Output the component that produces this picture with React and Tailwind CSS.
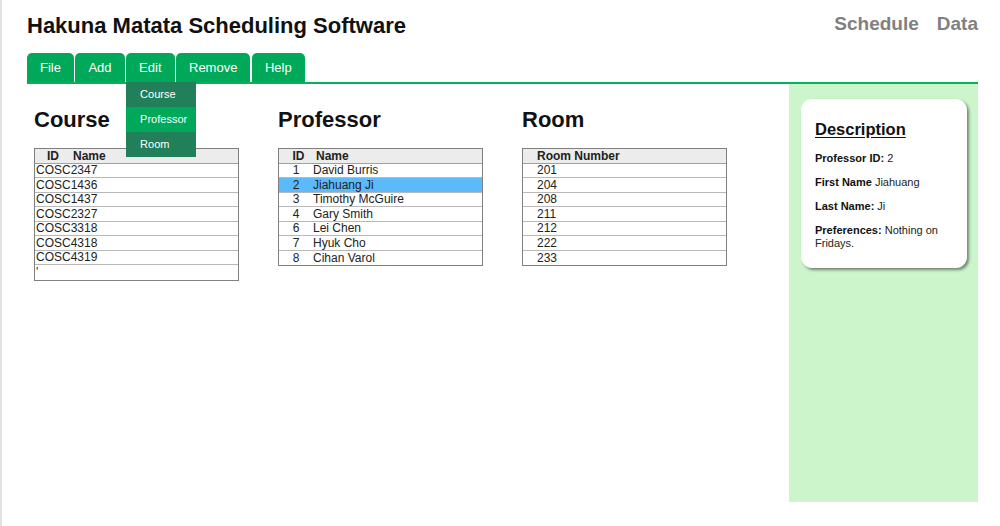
const courses = ["COSC2347", "COSC1436", "COSC1437", "COSC2327", "COSC3318", "COSC4318", "COSC4319", "'"];

const professors = [
  { id: 1, name: "David Burris" },
  { id: 2, name: "Jiahuang Ji" },
  { id: 3, name: "Timothy McGuire" },
  { id: 4, name: "Gary Smith" },
  { id: 6, name: "Lei Chen" },
  { id: 7, name: "Hyuk Cho" },
  { id: 8, name: "Cihan Varol" },
];

const rooms = ["201", "204", "208", "211", "212", "222", "233"];

const tabs = ["File", "Add", "Edit", "Remove", "Help"];

function Tab({ label, children }) {
  return (
    <div className="relative">
      <div className="h-[29px] px-[13px] flex items-center bg-[#00a859] text-white text-[13px] rounded-t-[5px]">
        {label}
      </div>
      {children}
    </div>
  );
}

function EditMenu() {
  return (
    <div className="absolute left-0 top-[29px] w-[70px] z-10 text-white text-[11px]">
      <div className="h-[25px] flex items-center pl-[14px] bg-[#21805a]">Course</div>
      <div className="h-[25px] flex items-center pl-[14px] bg-[#00a859]">Professor</div>
      <div className="h-[25px] flex items-center pl-[14px] bg-[#21805a]">Room</div>
    </div>
  );
}

function Row({ children, selected }) {
  return (
    <div
      className={
        "h-[14.5px] flex items-center border-b border-[#b8b8b8] last:border-b-0 " +
        (selected ? "bg-[#5cbafa]" : "bg-white")
      }
    >
      {children}
    </div>
  );
}

function Header({ children }) {
  return (
    <div className="h-[14.5px] flex items-center bg-[#ececec] border-b border-[#a0a0a0] font-bold">
      {children}
    </div>
  );
}

function Column({ title, children }) {
  return (
    <div className="w-[244px]">
      <h2 className="text-[22px] font-bold leading-none text-[#111]">{title}</h2>
      <div className="mt-[17.5px] w-[205px] border border-[#808080] text-[12px] leading-none text-[#222]">
        {children}
      </div>
    </div>
  );
}

export default function App() {
  return (
    <div className="h-[526px] w-full bg-white border-l-2 border-[#e2e2e2] font-['Liberation_Sans',Arial,sans-serif] overflow-hidden">
      <div className="pl-[25px] pr-[22px]">
        <div className="flex justify-between items-start pt-[15px]">
          <h1 className="text-[22px] font-bold leading-none text-[#111]">
            Hakuna Matata Scheduling Software
          </h1>
          <nav className="flex gap-[18px] text-[19px] font-bold leading-none text-[#808080] -mt-px">
            <span>Schedule</span>
            <span>Data</span>
          </nav>
        </div>

        <div className="mt-[16px] flex gap-[1.5px]">
          {tabs.map((t) => (
            <Tab key={t} label={t}>
              {t === "Edit" && <EditMenu />}
            </Tab>
          ))}
        </div>
        <div className="h-[2px] bg-[#00b35c]" />

        <div className="flex">
          <div className="flex-1 flex pl-[7px] pt-[24.5px]">
            <Column title="Course">
              <Header>
                <span className="w-[28px] text-center pl-[8px]">ID</span>
                <span className="pl-[10px]">Name</span>
              </Header>
              {courses.map((c, i) => (
                <Row key={i}>
                  <span className="pl-px">{c}</span>
                </Row>
              ))}
            </Column>

            <Column title="Professor">
              <Header>
                <span className="w-[37px] text-center pl-[2px]">ID</span>
                <span>Name</span>
              </Header>
              {professors.map((p) => (
                <Row key={p.id} selected={p.id === 2}>
                  <span className="w-[34px] text-center">{p.id}</span>
                  <span>{p.name}</span>
                </Row>
              ))}
            </Column>

            <Column title="Room">
              <Header>
                <span className="pl-[14px]">Room Number</span>
              </Header>
              {rooms.map((r) => (
                <Row key={r}>
                  <span className="pl-[14px]">{r}</span>
                </Row>
              ))}
            </Column>
          </div>

          <aside className="w-[189px] h-[418px] bg-[#ccf5cc] pt-[15px] pl-[12px]">
            <div className="w-[166px] bg-white rounded-[11px] shadow-[2px_2px_3px_rgba(0,0,0,0.45)] pt-[22px] pb-[18px] px-[14px] text-[#222]">
              <h3 className="text-[16.5px] font-bold leading-none underline underline-offset-2 text-[#111]">
                Description
              </h3>
              <div className="mt-[14px] text-[11px] leading-[13px] space-y-[11px]">
                <p><b className="text-[#111]">Professor ID:</b> 2</p>
                <p><b className="text-[#111]">First Name</b> Jiahuang</p>
                <p><b className="text-[#111]">Last Name:</b> Ji</p>
                <p><b className="text-[#111]">Preferences:</b> Nothing on Fridays.</p>
              </div>
            </div>
          </aside>
        </div>
      </div>
    </div>
  );
}
